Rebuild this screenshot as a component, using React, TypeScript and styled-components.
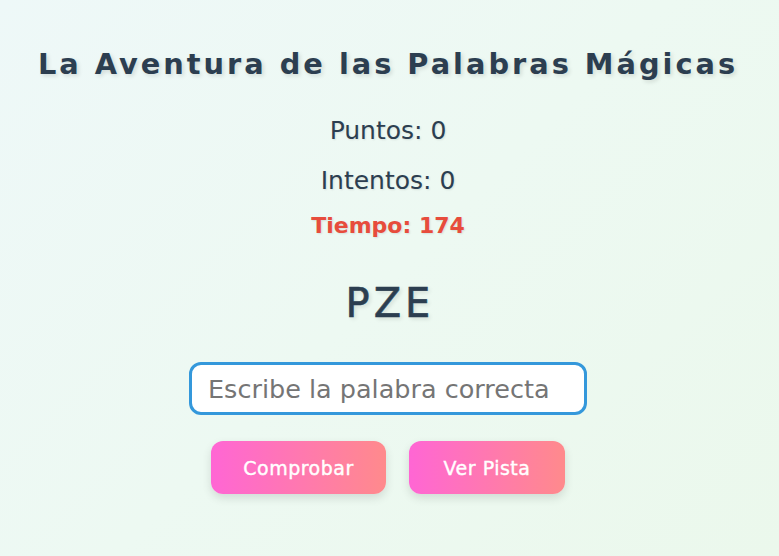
import React from "react";
import styled, { createGlobalStyle } from "styled-components";

const Global = createGlobalStyle`
  html, body { margin: 0; padding: 0; }
  body {
    min-height: 556px;
    background: linear-gradient(135deg, #eef8f8 0%, #edf9f2 50%, #ebf8ec 100%);
    font-family: "DejaVu Sans", "Noto Sans", sans-serif;
    color: #2c3e50;
  }
`;

const Page = styled.main`
  display: flex;
  flex-direction: column;
  align-items: center;
  padding: 46px 3px 0 0;
`;

const Title = styled.h1`
  margin: 0;
  font-size: 28.8px;
  line-height: 36px;
  font-weight: 700;
  letter-spacing: 3px;
  color: #2c3e50;
  text-shadow: 2px 2px 4px rgba(0, 0, 0, 0.12);
`;

const Stat = styled.div<{ $danger?: boolean; $gap: number }>`
  margin-top: ${(p) => p.$gap}px;
  font-size: ${(p) => (p.$danger ? "22px" : "25px")};
  line-height: 30px;
  font-weight: ${(p) => (p.$danger ? 700 : 400)};
  color: ${(p) => (p.$danger ? "#e74c3c" : "#2c3e50")};
  text-shadow: 1px 1px 2px rgba(0, 0, 0, 0.1);
`;

const Word = styled.div`
  margin-top: 38px;
  font-size: 40px;
  line-height: 48px;
  letter-spacing: 4px;
  padding-left: 4px;
  color: #2c3e50;
  -webkit-text-stroke: 0.6px #2c3e50;
  text-shadow: 2px 2px 4px rgba(0, 0, 0, 0.12);
`;

const Input = styled.input`
  margin-top: 35px;
  box-sizing: border-box;
  width: 398px;
  height: 53px;
  padding: 0 16px;
  border: 3px solid #3498db;
  border-radius: 12px;
  background: #fff;
  font-family: inherit;
  font-size: 25.5px;
  color: #2c3e50;
  outline: none;
  &::placeholder { color: #757575; }
`;

const Actions = styled.div`
  display: flex;
  gap: 23px;
  margin-top: 26px;
`;

const Button = styled.button<{ $w: number }>`
  width: ${(p) => p.$w}px;
  height: 53px;
  border: none;
  border-radius: 12px;
  background: linear-gradient(90deg, #ff66d4 0%, #ff8a8c 100%);
  color: #fff;
  font-family: inherit;
  font-size: 19px;
  font-weight: 400;
  letter-spacing: 0.5px;
  -webkit-text-stroke: 0.4px #fff;
  box-shadow: 0 4px 10px rgba(0, 0, 0, 0.12);
  cursor: pointer;
`;

export default function App() {
  return (
    <>
      <Global />
      <Page>
        <Title>La Aventura de las Palabras Mágicas</Title>
        <Stat $gap={34}>Puntos: 0</Stat>
        <Stat $gap={20}>Intentos: 0</Stat>
        <Stat $gap={15} $danger>Tiempo: 174</Stat>
        <Word>PZE</Word>
        <Input placeholder="Escribe la palabra correcta" />
        <Actions>
          <Button $w={175}>Comprobar</Button>
          <Button $w={156}>Ver Pista</Button>
        </Actions>
      </Page>
    </>
  );
}
